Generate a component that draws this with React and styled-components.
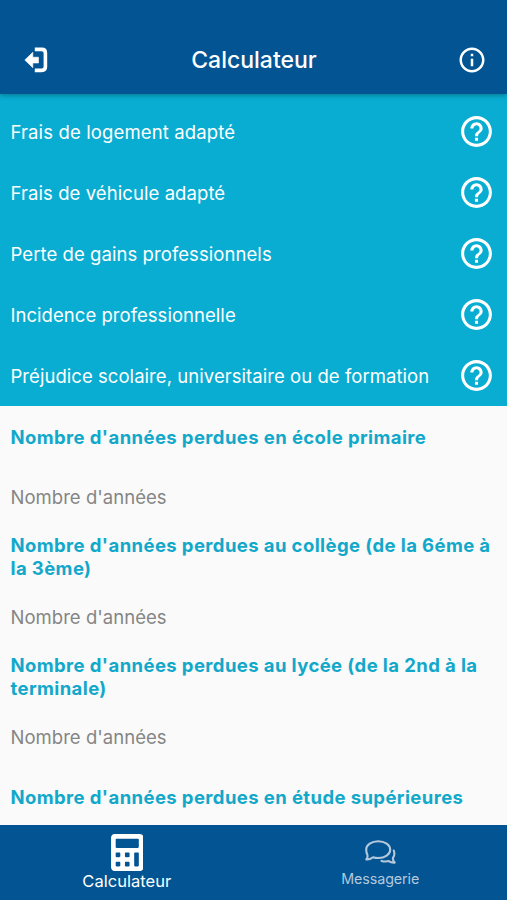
import React from 'react';
import styled, { createGlobalStyle } from 'styled-components';
import { MdHelpOutline, MdInfoOutline } from 'react-icons/md';

const GlobalStyle = createGlobalStyle`
  * { box-sizing: border-box; }
  body { margin: 0; background: #fafafa; font-family: Inter, "Liberation Sans", sans-serif; }
`;

const Screen = styled.div`
  display: flex;
  flex-direction: column;
  height: 900px;
  width: 507px;
  overflow: hidden;
  background: #fafafa;
`;

const Header = styled.header`
  display: grid;
  grid-template-columns: 71px 1fr 70px;
  align-items: center;
  flex: none;
  height: 94px;
  padding-top: 25px;
  background: #025493;
  color: #fff;
  z-index: 1;
  box-shadow: 0 1px 5px rgba(0, 0, 0, 0.35);
`;

const Title = styled.h1`
  margin: 0;
  text-align: center;
  font-size: 23px;
  line-height: 28px;
  font-weight: 500;
  letter-spacing: 0;
`;

const IconButton = styled.button`
  display: flex;
  justify-content: center;
  padding: 0;
  border: 0;
  background: none;
  color: inherit;
`;

const Categories = styled.section`
  flex: none;
  padding-top: 7px;
  height: 312px;
  background: #09add1;
  color: #fff;
`;

const CategoryRow = styled.div`
  display: flex;
  align-items: center;
  justify-content: space-between;
  height: 61px;
  padding: 0 12px 0 10.5px;
  font-size: 18.5px;
  letter-spacing: ${(p) => p.$spacing}px;
  white-space: nowrap;
`;

const Form = styled.main`
  flex: 1;
  min-height: 0;
  overflow: hidden;
  padding: 19.5px 10.5px 0;
`;

const Question = styled.label`
  display: block;
  color: #12a8ca;
  font-size: 18.5px;
  line-height: 23.4px;
  font-weight: 700;
  letter-spacing: 0.4px;
  white-space: pre;
`;

const Answer = styled.input`
  display: block;
  width: 100%;
  height: 49px;
  margin: ${(p) => p.$top}px 0 0;
  padding: 0 0 1px;
  border: 0;
  outline: 0;
  background: transparent;
  font: 400 18.5px Inter, "Liberation Sans", sans-serif;
  letter-spacing: 0.03px;
  &::placeholder { color: #858585; opacity: 1; }
`;

const TabBar = styled.nav`
  display: grid;
  grid-template-columns: 1fr 1fr;
  flex: none;
  height: 75px;
  background: #025493;
`;

const Tab = styled.div`
  display: flex;
  flex-direction: column;
  align-items: center;
  padding-top: ${(p) => (p.$active ? 8.5 : 13)}px;
  color: ${(p) => (p.$active ? '#fff' : '#b4c8dc')};
  font-size: ${(p) => (p.$active ? 16.5 : 14.3)}px;
  line-height: 20px;
  letter-spacing: ${(p) => (p.$active ? 0.02 : -0.1)}px;
`;

const TabLabel = styled.span`
  margin-top: ${(p) => p.$gap}px;
`;

const ExitIcon = () => (
  <svg width="24" height="26" viewBox="0 0 24 26">
    <path d="M10.800 2.400H17.800Q21.400 2.400 21.400 6V19.800Q21.400 23.400 17.800 23.400H10.800" fill="none" stroke="currentColor" strokeWidth="3.600" />
    <path d="M.8 13 8.800 5.300V10.200H14.500V16H8.800V20.700Z" fill="currentColor" stroke="currentColor" strokeWidth=".6" strokeLinejoin="round" />
  </svg>
);

const CalculatorIcon = () => (
  <svg width="32.500" height="37" viewBox="0 0 448 512" fill="currentColor">
    <path d="M400 0H48C22.400 0 0 22.400 0 48v416c0 25.600 22.400 48 48 48h352c25.600 0 48-22.400 48-48V48c0-25.600-22.400-48-48-48zM128 435.200c0 6.400-6.400 12.800-12.800 12.800H76.800c-6.400 0-12.800-6.400-12.800-12.800v-38.400c0-6.400 6.400-12.800 12.800-12.800h38.400c6.400 0 12.800 6.400 12.800 12.800v38.400zm0-128c0 6.400-6.400 12.800-12.800 12.800H76.800c-6.400 0-12.800-6.400-12.800-12.800v-38.400c0-6.400 6.400-12.800 12.800-12.800h38.400c6.400 0 12.800 6.400 12.800 12.800v38.400zm128 128c0 6.400-6.400 12.800-12.800 12.800h-38.400c-6.400 0-12.800-6.400-12.800-12.800v-38.400c0-6.400 6.400-12.800 12.800-12.800h38.400c6.400 0 12.800 6.400 12.800 12.800v38.400zm0-128c0 6.400-6.400 12.800-12.800 12.800h-38.400c-6.400 0-12.800-6.400-12.800-12.800v-38.400c0-6.400 6.400-12.800 12.800-12.800h38.400c6.400 0 12.800 6.400 12.800 12.800v38.400zm128 128c0 6.400-6.400 12.800-12.800 12.800h-38.400c-6.400 0-12.800-6.400-12.800-12.800V268.800c0-6.400 6.400-12.800 12.800-12.800h38.400c6.400 0 12.800 6.400 12.800 12.800v166.400zm0-256c0 6.400-6.400 12.800-12.800 12.800H76.800c-6.400 0-12.800-6.400-12.800-12.800V76.800C64 70.400 70.400 64 76.800 64h294.400c6.400 0 12.800 6.400 12.800 12.800v102.400z" />
  </svg>
);

const MessagesIcon = () => (
  <svg width="32" height="28" viewBox="0 0 32 28" fill="none" stroke="currentColor" strokeWidth="2.1" strokeLinecap="round" strokeLinejoin="round">
    <path d="M3.500 17.200Q2.200 14.500 2.200 11.500C2.200 6.800 7.500 3.200 14.200 3.200S26.200 7 26.200 11.700 20.900 20 14.200 20Q11.300 20 9 19.200Q5.800 21.800 2.300 21.500Q4 19.500 3.500 17.200Z" />
    <path d="M29.800 12.500Q31.300 16.800 28.900 20Q28.700 22.600 30.700 24.600Q27.300 24.900 24.800 23.100Q21.200 24.100 17.500 22.900" />
  </svg>
);

const categories = [
  { name: 'Frais de logement adapté', spacing: 0.13 },
  { name: 'Frais de véhicule adapté', spacing: 0.08 },
  { name: 'Perte de gains professionnels', spacing: 0.07 },
  { name: 'Incidence professionnelle', spacing: 0.04 },
  { name: 'Préjudice scolaire, universitaire ou de formation', spacing: 0.05 },
];

const questions = [
  { label: "Nombre d'années perdues en école primaire", top: 24 },
  { label: "Nombre d'années perdues au collège (de la 6éme à\nla 3ème)", top: 12 },
  { label: "Nombre d'années perdues au lycée (de la 2nd à la\nterminale)", top: 12 },
];

const QuestionBlock = styled.div`
  padding-bottom: ${(p) => (p.$last ? 24 : 12)}px;
`;

export default function App() {
  return (
    <Screen>
      <GlobalStyle />
      <Header>
        <IconButton aria-label="Quitter"><ExitIcon /></IconButton>
        <Title>Calculateur</Title>
        <IconButton aria-label="Informations"><MdInfoOutline size={30} /></IconButton>
      </Header>
      <Categories>
        {categories.map(({ name, spacing }) => (
          <CategoryRow key={name} $spacing={spacing}>
            {name}
            <MdHelpOutline size={37} />
          </CategoryRow>
        ))}
      </Categories>
      <Form>
        {questions.map((q, i) => (
          <QuestionBlock key={q.label} $last={i === questions.length - 1}>
            <Question>{q.label}</Question>
            <Answer $top={q.top} placeholder="Nombre d'années" />
          </QuestionBlock>
        ))}
        <Question>Nombre d'années perdues en étude supérieures</Question>
      </Form>
      <TabBar>
        <Tab $active>
          <CalculatorIcon />
          <TabLabel $gap={0.5}>Calculateur</TabLabel>
        </Tab>
        <Tab>
          <MessagesIcon />
          <TabLabel $gap={3}>Messagerie</TabLabel>
        </Tab>
      </TabBar>
    </Screen>
  );
}
